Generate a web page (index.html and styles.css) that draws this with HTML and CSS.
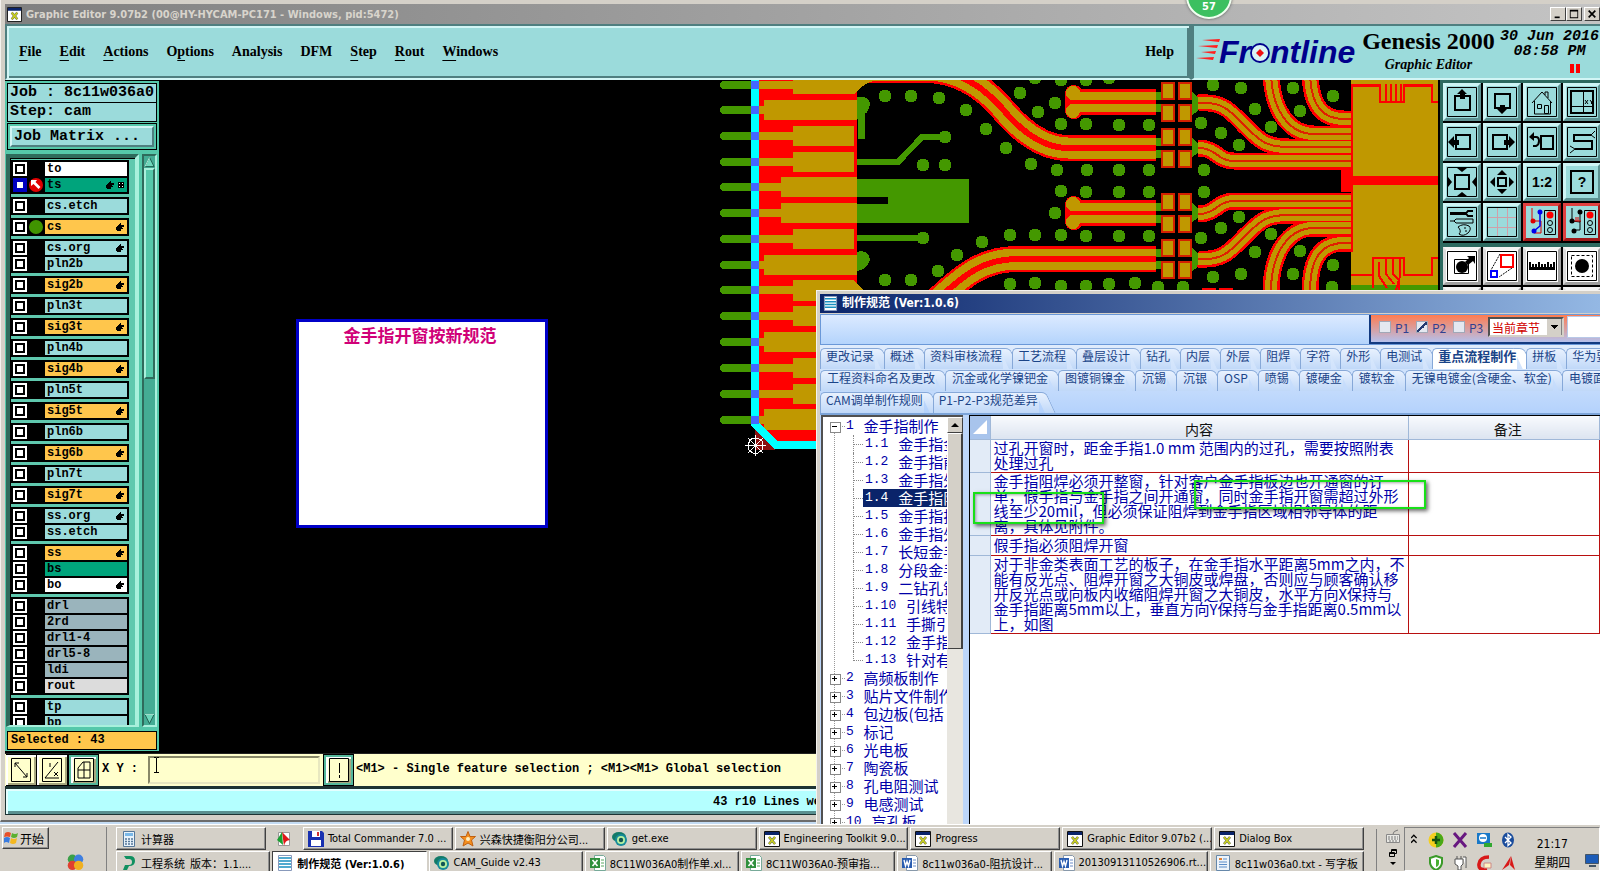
FILE: index.html
```html
<!DOCTYPE html>
<html lang="zh-CN">
<head>
<meta charset="utf-8">
<title>Graphic Editor 9.07b2</title>
<link rel="stylesheet" href="styles.css">
</head>
<body>
<svg class="defs" aria-hidden="true">
  <symbol id="i-x" viewBox="0 0 16 16"><path fill="#fff" stroke="#111" d="M.5.5h15v15H.5z"/><path fill="#0a246a" d="M1 1h14v3H1z"/><path stroke="#555" stroke-width="2.600" d="M5 6l6 7M11 6l-6 7"/><path stroke="#c8d020" stroke-width="1.800" d="M5 6l6 7M11 6l-6 7"/></symbol>
  <symbol id="i-list" viewBox="0 0 16 16"><path fill="#fff" stroke="#89b" d="M1.5.5h13v15h-13z"/><path stroke="#1a8fc0" stroke-width="1.6" d="M2 3h12M2 6h12M2 9h12M2 12h12"/></symbol>
  <symbol id="i-word" viewBox="0 0 16 16"><path fill="#fff" stroke="#89a" d="M4.500.5h9l2 2v13h-11z"/><path stroke="#6a8cc8" d="M11 5h3M11 8h3M11 11h3"/><path fill="#2a5db0" d="M0 3h10v10H0z"/><path fill="none" stroke="#fff" stroke-width="1.400" d="M2 5l1.500 6L5 6.500 6.500 11 8 5"/></symbol>
  <symbol id="i-xls" viewBox="0 0 16 16"><path fill="#fff" stroke="#7a9" d="M4.500.5h9l2 2v13h-11z"/><path stroke="#5aa860" d="M11 5h3M11 8h3M11 11h3"/><path fill="#2f8f3c" d="M0 3h10v10H0z"/><path stroke="#fff" stroke-width="1.600" d="M2.500 5l5 6M7.500 5l-5 6"/></symbol>
  <symbol id="i-eye" viewBox="0 0 16 16"><ellipse cx="7" cy="6" rx="7" ry="5" fill="#127a68"/><circle cx="9" cy="9" r="6" fill="#178a9a"/><circle cx="9" cy="9" r="4" fill="#b7f0a0"/><circle cx="9" cy="9" r="2.200" fill="#155"/></symbol>
  <symbol id="i-hand" viewBox="0 0 8 8"><path fill="#000" d="M0 4h1V3h1V2h1V1h1V0h1v2h3v2H6v1h1v1H5v2H1V7H0z"/></symbol>
</svg>

<main class="desktop">
<section class="editor">
  <header class="titlebar">
    <svg class="ico"><use href="#i-x"/></svg>
    <span class="title">Graphic Editor 9.07b2 (00@HY-HYCAM-PC171 - Windows, pid:5472)</span>
    <span class="winbtns">
      <button aria-label="Minimize"><svg viewBox="0 0 12 12"><path d="M2 9h6v2H2z"/></svg></button><button aria-label="Maximize"><svg viewBox="0 0 12 12"><path d="M1 1h10v10H1zM2 3v7h8V3z" fill-rule="evenodd"/></svg></button><button class="close" aria-label="Close"><svg viewBox="0 0 12 12"><path d="M2 2l8 8M10 2l-8 8" stroke="#000" stroke-width="2"/></svg></button>
    </span>
  </header>
  <div class="top">
    <nav class="menubar">
      <button><u>F</u>ile</button><button><u>E</u>dit</button><button><u>A</u>ctions</button><button>O<u>p</u>tions</button><button>Analysis</button><button>DFM</button><button><u>S</u>tep</button><button><u>R</u>out</button><button><u>W</u>indows</button><button class="help">Help</button>
    </nav>
    <div class="brand">
      <svg class="logo" viewBox="0 0 162 34" role="img" aria-label="Frontline">
        <path fill="#ff2020" d="M6 6l18-1-1 3zM2 12l20-1-1 3zM5 18l15-1-1 3zM0 24l18-1-1 3z"/>
        <g fill="#00008c" class="logotext"><text x="23" y="29">Fr</text><text x="74" y="29">ntline</text></g>
        <circle cx="64" cy="19" r="9" fill="#d9f4f4" stroke="#00008c" stroke-width="1.800"/>
        <path fill="#f01010" d="M64 15l4 4-4 4-4-4z"/>
      </svg>
      <div class="product"><b>Genesis 2000</b><i>Graphic Editor</i></div>
      <div class="clock"><span>30 Jun 2016</span><span>08:58 PM</span><svg class="pause" viewBox="0 0 10 9"><path fill="#f00" d="M0 0h4v9H0zM6 0h4v9H6z"/></svg></div>
    </div>
  </div>

  <div class="work">
    <aside class="side">
      <div class="job"><p>Job : 8c11w036a0</p><p>Step: cam</p></div>
      <div class="matrix"><button>Job Matrix ...</button></div>
      <div class="layers">
        <div class="list">
          <div class="grp"><div class="r w"><input type="checkbox" aria-label="to"><i></i><b>to</b></div><div class="r g cur"><input type="checkbox" aria-label="ts"><i><svg viewBox="0 0 14 14"><circle cx="7" cy="7" r="7" fill="#e00000"/><path fill="#fff" d="M2 2h6L6.500 4l5 5-2 2-5-5L2 8z"/></svg></i><b>ts<svg class="hand"><use href="#i-hand"/></svg><svg class="cell" viewBox="0 0 6 6"><path fill="#000" d="M0 0h6v6H0z"/><path fill="#fff" d="M1 1h1v1H1zM4 1h1v1H4zM1 4h1v1H1zM4 4h1v1H4z"/></svg></b></div></div>
          <div class="grp"><div class="r c"><input type="checkbox" aria-label="cs.etch"><i></i><b>cs.etch</b></div></div>
          <div class="grp"><div class="r o"><input type="checkbox" aria-label="cs"><i><svg viewBox="0 0 14 14"><circle cx="7" cy="7" r="7" fill="#409400"/></svg></i><b>cs<svg class="hand"><use href="#i-hand"/></svg></b></div></div>
          <div class="grp"><div class="r c"><input type="checkbox" aria-label="cs.org"><i></i><b>cs.org<svg class="hand"><use href="#i-hand"/></svg></b></div><div class="r c"><input type="checkbox" aria-label="pln2b"><i></i><b>pln2b</b></div></div>
          <div class="grp"><div class="r o"><input type="checkbox" aria-label="sig2b"><i></i><b>sig2b<svg class="hand"><use href="#i-hand"/></svg></b></div></div>
          <div class="grp"><div class="r c"><input type="checkbox" aria-label="pln3t"><i></i><b>pln3t</b></div></div>
          <div class="grp"><div class="r o"><input type="checkbox" aria-label="sig3t"><i></i><b>sig3t<svg class="hand"><use href="#i-hand"/></svg></b></div></div>
          <div class="grp"><div class="r c"><input type="checkbox" aria-label="pln4b"><i></i><b>pln4b</b></div></div>
          <div class="grp"><div class="r o"><input type="checkbox" aria-label="sig4b"><i></i><b>sig4b<svg class="hand"><use href="#i-hand"/></svg></b></div></div>
          <div class="grp"><div class="r c"><input type="checkbox" aria-label="pln5t"><i></i><b>pln5t</b></div></div>
          <div class="grp"><div class="r o"><input type="checkbox" aria-label="sig5t"><i></i><b>sig5t<svg class="hand"><use href="#i-hand"/></svg></b></div></div>
          <div class="grp"><div class="r c"><input type="checkbox" aria-label="pln6b"><i></i><b>pln6b</b></div></div>
          <div class="grp"><div class="r o"><input type="checkbox" aria-label="sig6b"><i></i><b>sig6b<svg class="hand"><use href="#i-hand"/></svg></b></div></div>
          <div class="grp"><div class="r c"><input type="checkbox" aria-label="pln7t"><i></i><b>pln7t</b></div></div>
          <div class="grp"><div class="r o"><input type="checkbox" aria-label="sig7t"><i></i><b>sig7t<svg class="hand"><use href="#i-hand"/></svg></b></div></div>
          <div class="grp"><div class="r c"><input type="checkbox" aria-label="ss.org"><i></i><b>ss.org<svg class="hand"><use href="#i-hand"/></svg></b></div><div class="r c"><input type="checkbox" aria-label="ss.etch"><i></i><b>ss.etch</b></div></div>
          <div class="grp"><div class="r o"><input type="checkbox" aria-label="ss"><i></i><b>ss<svg class="hand"><use href="#i-hand"/></svg></b></div><div class="r g"><input type="checkbox" aria-label="bs"><i></i><b>bs</b></div><div class="r w"><input type="checkbox" aria-label="bo"><i></i><b>bo<svg class="hand"><use href="#i-hand"/></svg></b></div></div>
          <div class="grp"><div class="r d"><input type="checkbox" aria-label="drl"><i></i><b>drl</b></div><div class="r d"><input type="checkbox" aria-label="2rd"><i></i><b>2rd</b></div><div class="r d"><input type="checkbox" aria-label="drl1-4"><i></i><b>drl1-4</b></div><div class="r d"><input type="checkbox" aria-label="drl5-8"><i></i><b>drl5-8</b></div><div class="r d"><input type="checkbox" aria-label="ldi"><i></i><b>ldi</b></div><div class="r l"><input type="checkbox" aria-label="rout"><i></i><b>rout</b></div></div>
          <div class="grp"><div class="r c"><input type="checkbox" aria-label="tp"><i></i><b>tp</b></div><div class="r c"><input type="checkbox" aria-label="bp"><i></i><b>bp</b></div></div>
        </div>
        <div class="mscroll">
          <svg viewBox="0 0 12 12"><path fill="#6fd8bc" stroke="#1d5a4c" d="M6 1l5 10H1z"/><path stroke="#b8f4e0" d="M6 1L1 11"/></svg>
          <div class="mthumb"></div>
          <svg viewBox="0 0 12 12"><path fill="#6fd8bc" stroke="#1d5a4c" d="M6 11L11 1H1z"/><path stroke="#b8f4e0" d="M1 1h10"/></svg>
        </div>
      </div>
      <p class="selected">Selected : 43</p>
    </aside>

    <div class="canvas">
      <svg class="pcb" viewBox="160 80 1281 690" preserveAspectRatio="xMinYMin slice" aria-hidden="true">
        <path fill="#f00" d="M760 80h98v210l20 14v137H772l-12-12z"/>
        <path fill="none" stroke="#449800" stroke-width="8" stroke-linecap="round" d="M725 85h29M725 110h29M725 136h29M725 162h29M725 187h29M725 213h29M725 239h29M725 265h29M725 290h29M725 316h29M725 342h29M725 368h29M725 394h29M725 420h29"/>
        <g fill="none" stroke-linecap="butt">
          <g stroke="#f00" stroke-width="26"><path id="tA" d="M860 70h70q40 2 71 36q34 42 68 42h88"/><path id="tD" d="M1157 259H1018C985 259 965 274 935 303"/></g>
          <g stroke="#c09800" stroke-width="21"><use href="#tA"/><use href="#tD"/></g>
          <g stroke="#f00" stroke-width="6"><use href="#tA"/><use href="#tD"/></g>
        </g>
        <path fill="none" stroke="#c09800" stroke-width="8" d="M760 85h40M760 110h10M760 136h40M760 162h40M760 187h30M760 213h30M760 239h40M760 265h10M760 290h40M760 316h40M760 342h10M760 368h40M760 394h40M760 420h10"/>
        <path fill="#c09800" d="M794 80h83q-12 3-22 14h-61zM765 100h93v20h-93zM794 126h61v20h-61zM794 152h61v20h-61zM782 177h76v20h-76zM782 203h76v20h-76zM794 229h61v20h-61zM765 255h93v20h-93zM794 280h61l20 21h-81zM794 306h61v20h-61zM765 332h93v20h-93zM794 358h61v20h-61zM794 384h61v20h-61zM765 409h93v21h-93z"/>
        <path fill="#449800" d="M858 97q12-2 13 7q-2 10-5 9v26h-7v-20h-1zM858 179h112v44h-112v-19h31v-7h-31zM858 252q12-3 13 8q-3 10-13 11z"/>
        <path fill="none" stroke="#449800" stroke-width="6" d="M858 162h41l24-25h23M858 238h66"/>
        <path fill="none" stroke="#449800" stroke-width="13" stroke-linecap="round" d="M946 137h0M924 165h0M946 165h0M924 238h0M886 96h0M912 96h0M940 98h0M967 110h0M987 129h0M1007 148h0M1032 164h0M1058 170h0M1021 93h0M1039 112h0M1056 103h0M1062 124h0M1062 191h0M1056 213h0M1062 235h0M1036 235h0M1011 235h0M983 242h0M958 255h0M939 271h0M886 280h0M912 280h0M1011 284h0M1036 283h0M1062 286h0M1062 80h0M1036 78h0M1087 80h0M1110 78h0M1087 124h0M1120 125h0M1150 125h0M1088 170h0M1120 170h0M1150 170h0M1087 192h0M1120 192h0M1150 192h0M1087 236h0M1120 236h0M1150 236h0M1087 286h0M1110 284h0M1136 283h0M1159 287h0M1184 287h0M1214 85h0M1242 88h0M1294 88h0M1334 96h0M1256 109h0M1301 111h0M1272 127h0M1202 123h0M1222 133h0M1240 145h0M1205 170h0M1205 192h0M1240 217h0M1222 228h0M1202 238h0M1272 234h0M1256 252h0M1301 251h0M1334 265h0M1294 274h0M1242 274h0M1214 277h0M1333 287h0"/>
        <g id="stub">
          <path fill="#f00" d="M1074 85q8 1 8 4h75v26h-75q-2 4-8 4q-7-1-8-8V93q1-7 8-8z"/>
          <path fill="none" stroke="#c09800" stroke-width="8" d="M1074 96h83M1074 108h83"/>
          <path stroke="#c09800" stroke-width="14" stroke-linecap="round" d="M1074 93h0M1074 111h0"/>
        </g>
        <use href="#stub" y="111"/>
        <path fill="none" stroke="#449800" stroke-width="8" d="M1157 96h6M1157 108h6M1157 142h6M1157 154h6M1157 207h6M1157 219h6M1157 253h6M1157 265h6"/>
        <path fill="#449800" d="M1193 92l6 5v14l-6 4zM1193 138l6 5v10l-6 4zM1193 203l6 5v10l-6 4zM1193 248l6 5v14l-6 4z"/>
        <path fill="#c09800" stroke="#d42000" stroke-width="2" d="M1163 83h12v16h-12zM1163 105h12v16h-12zM1163 129h12v16h-12zM1163 151h12v16h-12zM1163 194h12v16h-12zM1163 216h12v16h-12zM1163 240h12v16h-12zM1163 262h12v16h-12zM1180 83h12v16h-12zM1180 105h12v16h-12zM1180 129h12v16h-12zM1180 151h12v16h-12zM1180 194h12v16h-12zM1180 216h12v16h-12zM1180 240h12v16h-12zM1180 262h12v16h-12z"/>
        <g id="fan" fill="none">
          <path stroke="#f00" stroke-width="17" d="M1199 103C1225 101 1232 112 1247 127C1262 142 1268 147 1290 147H1352M1199 148C1218 148 1218 161 1235 161H1352M1272 70C1272 110 1290 134 1315 134H1352M1311 70C1311 105 1323 119 1345 119H1352"/>
          <path stroke="#c09800" stroke-width="12" d="M1199 103C1225 101 1232 112 1247 127C1262 142 1268 147 1290 147H1352M1199 148C1218 148 1218 161 1235 161H1352M1272 70C1272 110 1290 134 1315 134H1352M1311 70C1311 105 1323 119 1345 119H1352"/>
          <path stroke="#e02000" stroke-width="2" d="M1199 103C1225 101 1232 112 1247 127C1262 142 1268 147 1290 147H1352M1199 148C1218 148 1218 161 1235 161H1352M1272 70C1272 110 1290 134 1315 134H1352M1311 70C1311 105 1323 119 1345 119H1352"/>
        </g>
        <use href="#fan" transform="translate(0 362) scale(1 -1)"/>
        <path fill="#c09800" d="M1352 80h87v205h-87z"/>
        <path fill="#449800" d="M1352 285h87v6h-87z"/>
        <path fill="#f00" d="M1342 169h10v7h87v9h-87v7h-10zM1352 84h28v3h-26v165h-2zM1405 84h27v3h-27zM1352 274h21v2h-21zM1405 274h27v2h-27z"/>
        <path fill="none" stroke="#f00" stroke-width="2" d="M1381 84v18h24V84M1387 84v18M1392 84v18M1397 84v18M1402 84v18M1439 102h-6V84M1374 276v-18h31v18M1380 262v14l8 12M1387 258v16l8 10M1394 258v16l6 6v10M1401 258v18l-4 14M1374 276v12M1439 258h-6v18"/>
        <path fill="#f00" d="M1203 288h14v3h-14zM1220 288h14v3h-14z"/>
        <path fill="#8b1010" d="M756 430l20 20h-20z"/>
        <path fill="none" stroke="#0ff" stroke-width="8" d="M756 80v344l21 21h60"/>
        <path fill="none" stroke="#4466ff" stroke-width="8" d="M752 85h8M752 110h8M752 136h8M752 162h8M752 187h8M752 213h8M752 239h8M752 265h8M752 290h8M752 316h8M752 342h8M752 368h8M752 394h8M752 420h8"/>
        <path fill="none" stroke="#fff" d="M746 445.500h21M756.500 435v21M749 438l15 15M764 438l-15 15M751 440l3-2h5l4 3 1 4-1 5-4 3h-5l-4-3-1-5z"/>
      </svg>
      <div class="note">金手指开窗按新规范</div>
    </div>

    <div class="tools">
      <div class="grid">
        <button aria-label="Pan up"><svg viewBox="0 0 32 32"><path class="f" d="M1.500 1.500h29v29h-29z"/><path class="k" d="M9 10h15v14H9z"/><path d="M16 3l5 5h-2v5h-5V8h-3z"/></svg></button>
        <button aria-label="Pan down"><svg viewBox="0 0 32 32"><path class="f" d="M1.500 1.500h29v29h-29z"/><path class="k" d="M9 8h15v14H9z"/><path d="M16 28l5-5h-2v-4h-5v4h-3z"/></svg></button>
        <button aria-label="Home"><svg viewBox="0 0 32 32"><path class="f" d="M1.500 1.500h29v29h-29z"/><path class="n" d="M6 17L16 6l10 11M8.500 15v13h16V15M22 12V6h-3v3M11.500 18.500h4v4h-4zM18.500 19.500h4v8h-4z"/></svg></button>
        <button aria-label="Coordinates"><svg viewBox="0 0 32 32"><path class="f" d="M1.500 1.500h29v29h-29z"/><path class="k" d="M5 5h22v22H5z"/><path class="n" d="M17.500 5v22M5 20.500h22"/><path class="n" d="M19 14l3 4M22 14l-3 4M24 14l1.500 2 1.500-2M25.500 16v2"/></svg></button>
        <button aria-label="Pan left"><svg viewBox="0 0 32 32"><path class="f" d="M1.500 1.500h29v29h-29z"/><path class="k" d="M10 9h14v14H10z"/><path d="M2 16l6-6v4h5v5H8v3z"/></svg></button>
        <button aria-label="Pan right"><svg viewBox="0 0 32 32"><path class="f" d="M1.500 1.500h29v29h-29z"/><path class="k" d="M7 9h14v14H7z"/><path d="M29 16l-6-6v4h-5v5h5v3z"/></svg></button>
        <button aria-label="Previous view"><svg viewBox="0 0 32 32"><path class="f" d="M1.500 1.500h29v29h-29z"/><path class="k" d="M15 10h12v13H15zM6 11h4q3 0 3 4t-3 5H7"/><path d="M3 11l5-5v9z"/></svg></button>
        <button aria-label="Snake"><svg viewBox="0 0 32 32"><path class="f" d="M1.500 1.500h29v29h-29z"/><path class="k" d="M25 9H8v6h18v8H9"/><path class="n" d="M25 9l4-4M25 9l4 3M9 23l-5 4M9 23l-5-3"/></svg></button>
        <button aria-label="Zoom out"><svg viewBox="0 0 32 32"><path class="f" d="M1.500 1.500h29v29h-29z"/><path class="k" d="M9 9h14v14H9z"/><path d="M16 6l-5-4h10zM16 26l-5 4h10zM6 16l-4-5v10zM26 16l4-5v10z"/></svg></button>
        <button aria-label="Zoom in"><svg viewBox="0 0 32 32"><path class="f" d="M1.500 1.500h29v29h-29z"/><path class="k" d="M12 12h8v8h-8z"/><path d="M16 4l5 5H11zM16 28l5-5H11zM4 16l5-5v10zM28 16l-5-5v10z"/></svg></button>
        <button class="lbl"><span>1:2</span></button>
        <button class="lbl q"><span>?</span></button>
        <button aria-label="Setup"><svg viewBox="0 0 32 32"><path class="f" d="M1.500 1.500h29v29h-29z"/><path d="M4 6h16v3H4z"/><path class="k" d="M27 5h-5l-2 2.500 2 2.500h5"/><path class="n" d="M4 15h4l2-2h17v4H10l-2-2M12 21q5-4 11-1 3 3-1 7-5 4-9 1 3-3-1-7zM18 22h2M21 25h-2"/></svg></button>
        <button aria-label="Grid"><svg viewBox="0 0 32 32"><path class="f" d="M1.500 1.500h29v29h-29z"/><path stroke="#d0a0a8" d="M11.500 2v28M21.500 2v28M2 11.500h28M2 21.500h28"/></svg></button>
        <button class="red" aria-label="Snap nets"><svg viewBox="0 0 32 32"><path fill="none" stroke="#d00" d="M6 2v12l3 1h6v12H8"/><path fill="none" stroke="#00e" stroke-width="1.500" d="M14 5v15l-6 5"/><circle cx="14" cy="6" r="2.500" fill="#00e"/><circle cx="7" cy="15" r="2.500" fill="#d00"/><circle cx="8" cy="25" r="2.500" fill="#00e"/><path class="f" d="M18.500 4.500h11v24h-11z"/><circle cx="24" cy="9" r="3.500" fill="#f00"/><g fill="none" stroke="#000"><circle cx="24" cy="17" r="2.500"/><circle cx="24" cy="24" r="2.500"/></g></svg></button>
        <button class="red" aria-label="Snap off"><svg viewBox="0 0 32 32"><path class="n" d="M6 2v13l8 1v-10M14 15v9H8"/><path stroke="#d00" d="M8 15h7M10 11v4M12 11v4"/><circle cx="14" cy="6" r="2.500"/><circle cx="6" cy="15" r="2.500"/><circle cx="8" cy="25" r="2.500"/><path class="f" d="M18.500 4.500h11v24h-11z"/><circle cx="24" cy="9" r="3.500" fill="#f00"/><g fill="none" stroke="#000"><circle cx="24" cy="17" r="2.500"/><circle cx="24" cy="24" r="2.500"/></g></svg></button>
      </div>
      <div class="grid white">
        <button aria-label="Select"><svg viewBox="0 0 32 32"><path class="f" d="M1.500 1.500h29v29h-29z"/><path class="f" d="M8.500 9.500h14v14h-14z"/><circle cx="16" cy="17" r="6"/><path d="M19 12l4-4-2-2h8v8l-2-3-5 4z"/></svg></button>
        <button aria-label="Scale"><svg viewBox="0 0 32 32"><path class="f" d="M1.500 1.500h29v29h-29z"/><path class="n" stroke-dasharray="2 1" d="M14 4L5 20M26 18L13 27"/><path fill="none" stroke="#f00" stroke-width="2" d="M15 5h12v12H15z"/><path fill="none" stroke="#00f" stroke-width="2" d="M5 21h6v6H5z"/></svg></button>
        <button aria-label="Measure"><svg viewBox="0 0 32 32"><path class="f" d="M1.500 1.500h29v29h-29z"/><path d="M3 17h26v3H3z"/><path class="n" stroke-width="2" d="M4 12v6M7 14v4M10 14v4M13 12v6M16 14v4M19 14v4M22 12v6M25 14v4M28 12v6"/></svg></button>
        <button aria-label="Region"><svg viewBox="0 0 32 32"><path class="f" d="M1.500 1.500h29v29h-29z"/><path class="f" stroke-dasharray="3 2" d="M5.500 5.500h21v21h-21z"/><circle cx="16" cy="16" r="7"/></svg></button>
        <button aria-label="Tool"></button><button aria-label="Tool"></button><button aria-label="Tool"></button><button aria-label="Tool"></button>
      </div>
    </div>
  </div>

  <div class="command">
    <button class="cb" aria-label="Absolute"><svg viewBox="0 0 20 24"><path class="f" d="M.5.5h19v23H.5z"/><path class="n" d="M4 5l12 14M4 5v4M4 5h4M16 19v-4M16 19h-4"/></svg></button>
    <button class="cb" aria-label="Angle"><svg viewBox="0 0 20 24"><path class="f" d="M.5.5h19v23H.5z"/><path class="n" d="M3 20L16 4M3 20h14M8 5v4M12 14l4 4M16 14l-4 4"/></svg></button>
    <button class="cb on" aria-label="Grid snap"><svg viewBox="0 0 20 24"><path class="f" d="M.5.5h19v23H.5z"/><path class="n" d="M4 10l5-6h7v16H4zM10 4v16M4 12h12"/></svg></button>
    <label class="xy" for="xy">X Y :</label>
    <input id="xy" type="text">
    <button class="cb on" aria-label="Alert"><svg viewBox="0 0 20 24"><path class="f" d="M.5.5h19v23H.5z"/><path class="n" d="M10.500 5v10M10.500 17v3"/></svg></button>
    <p class="hint">&lt;M1&gt; - Single feature selection ; &lt;M1&gt;&lt;M1&gt; Global selection</p>
    <svg class="ibeam" viewBox="0 0 7 16"><path stroke="#000" fill="none" d="M1 .5h2l.5.5.5-.5h2M3.500 1v14M1 15.500h5"/></svg>
  </div>
  <div class="status"><p>43 r10 Lines were selected</p></div>
</section>

<div class="bubble">57</div>

<section class="dialog">
  <header class="dtitle"><svg class="ico"><use href="#i-list"/></svg>制作规范 (Ver:1.0.6)</header>
  <div class="dbar">
    <div class="filters">
      <label><input type="checkbox">P1</label><label><input type="checkbox" checked>P2</label><label><input type="checkbox">P3</label>
      <select aria-label="范围"><option>当前章节</option></select>
      <input class="search" type="text" aria-label="查找">
    </div>
  </div>
  <nav class="tabs">
    <div class="trow"><button>更改记录</button><button>概述</button><button>资料审核流程</button><button>工艺流程</button><button>叠层设计</button><button>钻孔</button><button>内层</button><button>外层</button><button>阻焊</button><button>字符</button><button>外形</button><button>电测试</button><button class="active">重点流程制作</button><button>拼板</button><button>华为要求</button></div>
    <div class="trow wide"><button>工程资料命名及更改</button><button>沉金或化学镍钯金</button><button>图镀铜镍金</button><button>沉锡</button><button>沉银</button><button>OSP</button><button>喷锡</button><button>镀硬金</button><button>镀软金</button><button>无镍电镀金(含硬金、软金)</button><button>电镀面铜</button></div>
    <div class="trow"><button>CAM调单制作规则</button><button>P1-P2-P3规范差异</button></div>
  </nav>
  <div class="dbody">
    <div class="tree">
      <ul>
        <li class="p open"><span>1 </span>金手指制作
          <ul>
            <li><span>1.1 </span>金手指金厚</li><li><span>1.2 </span>金手指前处理</li><li><span>1.3 </span>金手指外形</li><li class="sel"><span>1.4 </span>金手指阻焊</li><li><span>1.5 </span>金手指排版</li><li><span>1.6 </span>金手指外层</li><li><span>1.7 </span>长短金手指</li><li><span>1.8 </span>分段金手指</li><li><span>1.9 </span>二钻孔镀金</li><li><span>1.10 </span>引线特殊</li><li><span>1.11 </span>手撕引线</li><li><span>1.12 </span>金手指板</li><li><span>1.13 </span>针对有要求</li>
          </ul>
        </li>
        <li class="p"><span>2 </span>高频板制作</li><li class="p"><span>3 </span>贴片文件制作</li><li class="p"><span>4 </span>包边板(包括</li><li class="p"><span>5 </span>标记</li><li class="p"><span>6 </span>光电板</li><li class="p"><span>7 </span>陶瓷板</li><li class="p"><span>8 </span>孔电阻测试</li><li class="p"><span>9 </span>电感测试</li><li class="p"><span>10 </span>盲孔板</li>
      </ul>
      <div class="vscroll"><button aria-label="Scroll up"><svg viewBox="0 0 8 4"><path d="M4 0l4 4H0z"/></svg></button><div class="vthumb"></div></div>
    </div>
    <div class="sheet">
      <table>
        <colgroup><col class="c0"><col class="c1"><col></colgroup>
        <thead><tr><th class="corner"><svg viewBox="0 0 14 14"><path fill="#fff" d="M14 0v14H0z"/></svg></th><th>内容</th><th class="rem">备注</th></tr></thead>
        <tbody>
          <tr><th></th><td>过孔开窗时，距金手指1.0 mm 范围内的过孔，需要按照附表<br>处理过孔</td><td></td></tr>
          <tr><th></th><td>金手指阻焊必须开整窗，针对客户金手指板边也开通窗的订<br>单，假手指与金手指之间开通窗，同时金手指开窗需超过外形<br>线至少20mil，但必须保证阻焊到金手指区域相邻导体的距<br>离，具体见附件。</td><td></td></tr>
          <tr class="one"><th></th><td>假手指必须阻焊开窗</td><td></td></tr>
          <tr><th></th><td>对于非金类表面工艺的板子，在金手指水平距离5mm之内，不<br>能有反光点、阻焊开窗之大铜皮或焊盘，否则应与顾客确认移<br>开反光点或向板内收缩阻焊开窗之大铜皮，水平方向X保持与<br>金手指距离5mm以上，垂直方向Y保持与金手指距离0.5mm以<br>上，如图</td><td></td></tr>
        </tbody>
      </table>
      <div class="mark m1"></div><div class="mark m2"></div>
    </div>
  </div>
</section>
</main>

<footer class="taskbar">
  <div class="startcol">
    <button class="start"><svg viewBox="0 0 16 16"><path fill="#e8502a" d="M2 3q3-2 6 0L7 7Q4 6 1 7z"/><path fill="#5cb030" d="M9 3q3 2 6 0l-1 4q-3 2-6 0z"/><path fill="#3a7ce0" d="M1 8q3-2 6 0l-1 5q-3-2-5 0z"/><path fill="#f4b820" d="M8 8q3 2 6 0l-1 5q-3 2-6 0z"/></svg>开始</button>
    <svg class="quick" viewBox="0 0 16 16"><circle cx="5" cy="5" r="4.500" fill="#3aa048"/><circle cx="11" cy="5" r="4.500" fill="#3f7fe0"/><circle cx="5" cy="11" r="4.500" fill="#e04030"/><circle cx="11" cy="11" r="4.500" fill="#f0b020"/></svg>
  </div>
  <div class="tasks">
    <div class="brow">
      <button class="first"><svg viewBox="0 0 16 16"><path fill="#e8f2fa" stroke="#579" d="M2.500.5h11v15h-11z"/><path fill="#7ab8e8" d="M4 2h8v3H4z"/><path stroke="#579" stroke-width="1.500" stroke-dasharray="2 1" d="M4 8h8M4 10.500h8M4 13h8"/></svg>计算器</button>
      <span class="loose"><svg viewBox="0 0 16 16"><path fill="#fff" stroke="#999" d="M2.500 1.500h11v13h-11z"/><path fill="#e01818" d="M6 1l8 8q-5 0-6 6z"/><path fill="#18a030" d="M6 1L1 9l6 5z"/></svg></span>
      <button><svg viewBox="0 0 16 16"><path fill="#1830b0" d="M0 0h14l2 2v14H0z"/><path fill="#fff" d="M4 0h8v6H4zM3 9h10v6H3z"/><path fill="#d03030" d="M9 1h2v4H9z"/></svg>Total Commander 7.0 ...</button>
      <button><svg viewBox="0 0 16 16"><path fill="#f49020" stroke="#c06010" d="M8 .5l2 5h5.500l-4 3.500 1.500 6-5-3-5 3 1.500-6-4-3.500H6z"/><circle cx="8" cy="8" r="2" fill="#fff0c0"/></svg>兴森快捷衡阳分公司...</button>
      <button><svg><use href="#i-eye"/></svg>get.exe</button>
      <button><svg><use href="#i-x"/></svg>Engineering Toolkit 9.0...</button>
      <button><svg><use href="#i-x"/></svg>Progress</button>
      <button><svg><use href="#i-x"/></svg>Graphic Editor 9.07b2 (...</button>
      <button><svg><use href="#i-x"/></svg>Dialog Box</button>
    </div>
    <div class="brow">
      <button><svg viewBox="0 0 16 16"><path fill="#109060" d="M3 1h6q5 0 5 5t-6 5l-2 4H2l2-5h4q3 0 3-3t-3-3H5z"/></svg>工程系统&ensp;版本：1.1....</button>
      <button class="on"><svg><use href="#i-list"/></svg>制作规范 (Ver:1.0.6)</button>
      <button><svg><use href="#i-eye"/></svg>CAM_Guide v2.43</button>
      <button><svg><use href="#i-xls"/></svg>8C11W036A0制作单.xl...</button>
      <button><svg><use href="#i-xls"/></svg>8C11W036A0-预审指...</button>
      <button><svg><use href="#i-word"/></svg>8c11w036a0-阻抗设计...</button>
      <button><svg><use href="#i-word"/></svg>20130913110526906.rt...</button>
      <button><svg viewBox="0 0 16 16"><path fill="#eef4fa" stroke="#68a" d="M1.500.5h13v15h-13z"/><path stroke="#e08030" stroke-width="2" d="M4 4h3"/><path stroke="#5a8cc8" d="M8 4h4M4 7h8M4 9.500h8M4 12h8"/></svg>8c11w036a0.txt - 写字板</button>
    </div>
  </div>
  <div class="lang">
    <svg viewBox="0 0 16 14"><path fill="#e8e8e4" stroke="#888" d="M1.500 5.500h13v8h-13z"/><path stroke="#777" stroke-dasharray="2 1" d="M3 8h10M3 10h10M4 12h8"/><path fill="none" stroke="#777" d="M8 5q0-3 5-4"/></svg>
    <svg viewBox="0 0 16 18"><path fill="none" stroke="#000" d="M6.500.5h5v4h-5zM4.500 3.500h5v4h-5zM6 1.500h6M4 4.500h6"/><path d="M5 13h6l-3 3z"/></svg>
  </div>
  <div class="tray">
    <svg class="chev" viewBox="0 0 6 10"><path fill="none" stroke="#000" stroke-width="1.400" d="M0 4l3-3 3 3M0 9l3-3 3 3"/></svg>
    <div class="icons">
      <svg viewBox="0 0 16 16"><circle cx="8" cy="8" r="7.500" fill="#f4d020"/><path fill="#48a818" d="M8 .5a7.500 7.500 0 010 15z"/><path stroke="#115010" stroke-width="2.500" d="M8 4v8M4 8h8"/></svg>
      <svg viewBox="0 0 16 16"><path stroke="#681880" stroke-width="3" d="M2 1l12 14M14 1L2 15"/></svg>
      <svg viewBox="0 0 16 16"><path fill="#1878c8" d="M1 1h13v11H1z"/><circle cx="7" cy="6" r="4" fill="#fff"/><path stroke="#1878c8" stroke-width="1.500" d="M4 6h6"/><path fill="#30a830" d="M8 11h8v4H8z"/></svg>
      <svg viewBox="0 0 16 16"><ellipse cx="8" cy="8" rx="6" ry="7.500" fill="#1a4c9c"/><path fill="none" stroke="#fff" stroke-width="1.300" d="M5 5l6 6-3 2.500v-11L11 5l-6 6"/></svg>
      <svg viewBox="0 0 16 16"><path fill="#fff" stroke="#3a9a28" stroke-width="2" d="M8 1l6 2v5q-1 5-6 7-5-2-6-7V3z"/><path fill="#48b030" d="M8 4l3 1v3q0 3-3 4z"/></svg>
      <svg viewBox="0 0 16 16"><path fill="#fff" stroke="#555" d="M3 4h8v5l-2 2v4H6v-4L3 9zM5 1v3M9 1v3M11 2h3v11"/></svg>
      <svg viewBox="0 0 16 16"><path fill="none" stroke="#d81818" stroke-width="3.500" d="M13 2Q4 2 3 9t8 5"/><path fill="#fff4c0" stroke="#c88" d="M8 8h7v5H8z"/></svg>
      <svg viewBox="0 0 16 16"><path fill="#d81818" d="M11 1l4 14-5-5z"/><path fill="#d81818" d="M11 1l-2 9-7 5z"/></svg>
    </div>
    <div class="time"><span>21:17</span><span>星期四</span></div>
    <svg class="mon" viewBox="0 0 14 14"><path fill="#1c5cb8" stroke="#456" d="M.5.5h13v9H.5z"/><path fill="#456" d="M4 11h7v2H4z"/></svg>
  </div>
</footer>
</body>
</html>
```
FILE: styles.css
```css
* { box-sizing: border-box; }
html, body { height: 100%; }
body { margin: 0; display: flex; flex-direction: column; overflow: hidden; background: #d4d0c8; font-family: "DejaVu Sans Condensed", "Noto Sans CJK SC", sans-serif; }
p, ul { margin: 0; padding: 0; }
button { font: inherit; color: inherit; padding: 0; margin: 0; border: 0; background: none; }
.defs { position: absolute; width: 0; height: 0; }
.desktop { flex: 1; min-height: 0; position: relative; overflow: hidden; background: #c4dcf4; }

/* editor window */
.editor { height: calc(100% - 2px); display: flex; flex-direction: column; padding: 4px 0 5px 4px; background: #d4d0c8; border-bottom: 2px solid #6c6c6c; border-left: 1px solid #f4f2ee; }
.titlebar { display: flex; align-items: center; gap: 4px; height: 20px; padding: 0 0 0 2px; background: linear-gradient(90deg, #808080, #c4c4c4); color: #d8d4cc; font-size: 11px; font-weight: bold; }
.ico { width: 15px; height: 15px; flex: none; }
.winbtns { margin-left: auto; display: flex; }
.winbtns button { width: 16px; height: 14px; background: #d4d0c8; border: 1px solid; border-color: #fff #404040 #404040 #fff; display: flex; justify-content: center; align-items: center; }
.winbtns svg { width: 10px; height: 10px; }
.winbtns .close { margin-left: 2px; }
.top { display: flex; flex: none; height: 56px; overflow: hidden; }
.menubar, .brand { background: #9bdbdb; border: 2px solid; border-color: #4f7f80 #4f7f80 #d2f5f5 #4f7f80; box-shadow: inset 2px 2px #d2f5f5, inset -2px -2px #4f7f80; }
.menubar { flex: 1; display: flex; align-items: center; gap: 18px; padding: 0 15px 0 12px; font: bold 14px/18px "Liberation Serif", serif; }
.menubar u { text-underline-offset: 4px; }
.help { margin-left: auto; }
.brand { display: flex; gap: 2px; width: 409px; padding: 3px 0 0 2px; overflow: hidden; box-shadow: none; white-space: nowrap; border-left-width: 3px; border-right-width: 0; }
.logo { width: 162px; height: 34px; margin-top: 5px; flex: none; }
.logotext { font: italic bold 32px "Liberation Sans", sans-serif; }
.product { display: flex; flex-direction: column; align-items: center; width: 137px; flex: none; font-family: "Liberation Serif", serif; }
.product b { font-size: 24px; line-height: 24px; }
.product i { font-size: 14px; line-height: 16px; font-weight: bold; margin-top: 4px; }
.clock { display: flex; flex-direction: column; align-items: center; width: 101px; flex: none; font: italic bold 15px/15px "Liberation Mono", monospace; }
.pause { width: 10px; height: 9px; margin: 5px 0 0 50px; }

.work { flex: 1; min-height: 0; display: flex; background: #000; overflow: hidden; }
.side { width: 154px; flex: none; display: flex; flex-direction: column; background: #55c8aa; padding: 2px 1px 1px 1px; border-top: 1px solid #000; font: bold 15px/17px "Liberation Mono", monospace; margin-bottom: 2px; }
.job { margin: 0 1px; background: #9bdbdb; border: 1px solid #000; }
.job p { height: 18px; padding-left: 2px; white-space: nowrap; overflow: hidden; }
.job p + p { border-top: 1px solid #000; height: 19px; }
.matrix { margin: 1px 1px 4px; border: 1px solid #000; padding: 2px; height: 27px; }
.matrix button { display: block; width: 100%; height: 21px; text-align: left; padding-left: 2px; background: #9bdbdb; border: 2px solid; border-color: #d2f5f5 #4f7f80 #4f7f80 #d2f5f5; }
.layers { flex: 1; min-height: 0; display: flex; gap: 3px; }
.list { width: 133px; overflow: hidden; border: 4px solid; border-width: 4px 4px 2px 4px; border-color: #2f6b5c #a8f0dc #a8f0dc #2f6b5c; box-shadow: inset 1px 1px #000; padding: 2px 6px 0 1px; display: flex; flex-direction: column; gap: 3px; background: #5fc8ae; font-size: 12px; line-height: 14px; }
.grp { flex: none; background: #000; padding: 2px; display: grid; gap: 2px; }
.r { display: flex; height: 14px; }
.r input { appearance: none; margin: 0; width: 14px; height: 14px; background: #fff; border: 2px solid #fff; box-shadow: inset 0 0 0 2px #000; }
.r i { width: 18px; display: flex; justify-content: center; }
.r i svg { width: 14px; height: 14px; }
.r b { flex: 1; display: flex; align-items: center; padding: 0 3px 0 2px; gap: 4px; }
.hand { width: 8px; height: 8px; margin-left: auto; }
.cell { width: 6px; height: 6px; }
.w b { background: #fff; } .g b { background: #00a47c; } .c b { background: #9bdbdb; } .o b { background: #ffc64c; } .d b { background: #9ab4bc; } .l b { background: #dcdcdc; }
.r.cur input { border-color: #0000c0; box-shadow: inset 0 0 0 2px #0000c0; }
.mscroll { width: 15px; display: flex; flex-direction: column; background: #44ac94; border: 2px solid; border-color: #2f6b5c #a8f0dc #a8f0dc #2f6b5c; }
.mscroll svg { width: 11px; height: 12px; flex: none; }
.mscroll svg:last-child { margin-top: auto; }
.mthumb { height: 37%; background: #55c8aa; border: 2px solid; border-color: #a8f0dc #2f6b5c #2f6b5c #a8f0dc; }
.selected { margin: 4px 1px 0; height: 19px; background: #ffc64c; border: 1px solid #000; padding-left: 3px; font-size: 12px; line-height: 17px; }

.canvas { flex: 1; min-width: 0; position: relative; overflow: hidden; }
.pcb { display: block; width: 100%; height: 100%; shape-rendering: crispEdges; }
.note { position: absolute; left: 137px; top: 239px; width: 252px; height: 209px; background: #fff; border: 3px solid #0000c8; padding-right: 4px; text-align: center; color: #d00078; font: bold 17px/26px "Noto Sans CJK SC", sans-serif; }

.tools { width: 160px; flex: none; background: #2c6a60; padding: 3px 0 0 3px; overflow: hidden; }
.grid { display: grid; grid-template-columns: repeat(4, 38px); gap: 2px; width: 160px; padding-bottom: 2px; background: #000; }
.grid + .grid { margin-top: 4px; }
.grid button { width: 38px; height: 38px; background: #9bdbdb; border: 3px solid; border-color: #cdf5f5 #5c9292 #5c9292 #cdf5f5; }
.grid svg { display: block; width: 32px; height: 32px; }
.grid.white button { background: #fff; border-color: #f4f4f4 #a0a0a0 #a0a0a0 #dcdcdc; }
.grid .red { border-color: #e04040 #a01818 #a01818 #e04040; }
.grid .lbl { padding: 1px; font: bold 14px/28px "Liberation Sans", sans-serif; }
.lbl span { display: block; border: 1px solid #000; height: 30px; }
.grid .lbl.q { padding: 4px; line-height: 20px; }
.lbl.q span { border-width: 2px; height: 24px; }
.f { fill: none; stroke: #000; } .k { fill: none; stroke: #000; stroke-width: 2; } .n { fill: none; stroke: #000; }

.command { position: relative; flex: none; display: flex; height: 33px; padding-left: 1px; background: #ffffcc; border-top: 1px solid #222; font: bold 12px/30px "Liberation Mono", monospace; white-space: nowrap; overflow: hidden; }
.cb { width: 31px; flex: none; padding: 0; display: flex; align-items: center; justify-content: center; background: #ffffcc; border: 1px solid #000; border-left-width: 0; box-shadow: inset 2px 2px #fff, inset -2px -2px #a8a880; }
.cb svg { width: 20px; height: 24px; }
.cb.on { border: 3px solid #55b89c; outline: 1px solid #000; outline-offset: -1px; }
.xy { width: 49px; padding-left: 3px; white-space: pre; }
.command input { width: 172px; min-width: 0; margin: 2px 3px 2px 0; background: #ffffcc; border: 2px solid; border-color: #888868 #e8e8c0 #e8e8c0 #888868; }
.hint { padding-left: 2px; }
.ibeam { position: absolute; left: 148px; top: 3px; width: 7px; height: 16px; }
.status { flex: none; height: 29px; border: 2px solid #1d3434; border-width: 3px 2px 1px 1px; background: #b4ffff; box-shadow: inset 2px 2px #e4ffff, inset -2px -3px #5a9090; font: bold 12px/26px "Liberation Mono", monospace; white-space: nowrap; overflow: hidden; }
.status p { padding-left: 707px; }

.bubble { position: absolute; left: 1186px; top: -27px; width: 46px; height: 46px; border-radius: 50%; background: #3cc060; border: 2px solid #f0fff0; box-shadow: 0 0 3px #555; color: #fff; font-size: 11px; font-weight: bold; line-height: 64px; text-align: center; }

/* specification window */
.dialog { position: absolute; left: 816px; right: 0; top: 290px; bottom: 0; display: flex; flex-direction: column; background: #d4d0c8; border: solid #f4f2ee; border-width: 1px 0 0 1px; padding: 3px 0 0 3px; font-family: "Noto Sans CJK SC", sans-serif; font-size: 12px; color: #123a80; overflow: hidden; }
.dtitle { height: 19px; flex: none; display: flex; align-items: center; gap: 4px; padding-left: 3px; background: linear-gradient(90deg, #0a246a, #94b8e4); color: #fff; font: bold 12px/19px "DejaVu Sans Condensed", "Noto Sans CJK SC", sans-serif; }
.dbar { flex: none; height: 31px; margin-top: 1px; display: flex; justify-content: flex-end; background: linear-gradient(#dceaff, #b4d4fc); border: 1px solid #6a98d8; border-right: 0; }
.filters { width: 231px; display: flex; align-items: center; background: linear-gradient(#ff7c50, #b4c0ec); border-left: 2px solid #123a80; border-bottom: 2px solid #123a80; padding: 0 0 3px 8px; overflow: hidden; }
.filters label { display: flex; align-items: center; gap: 4px; width: 37px; color: #304090; flex: none; }
.filters label input { appearance: none; width: 12px; height: 12px; margin: 0; background: #e4e8f0; border: 1px solid #a0a8b8; flex: none; }
.filters label input:checked { background: #e4e8f0 linear-gradient(135deg, transparent 42%, #223a70 42% 60%, transparent 60%); }
.filters select { width: 76px; height: 20px; flex: none; margin: 0 2px 0 -2px; font: 12px "Noto Sans CJK SC", sans-serif; color: #d00000; border: 2px solid; border-color: #505050 #d4d0c8 #d4d0c8 #505050; border-radius: 0; appearance: none; padding: 0 0 0 2px; background: linear-gradient(#000, #000) 61px 6px/7px 1px no-repeat, linear-gradient(#000, #000) 62px 7px/5px 1px no-repeat, linear-gradient(#000, #000) 63px 8px/3px 1px no-repeat, linear-gradient(#000, #000) 64px 9px/1px 1px no-repeat, linear-gradient(#808080, #808080) 71px 0/1px 16px no-repeat, linear-gradient(#d4d0c8, #d4d0c8) 57px 0/15px 16px no-repeat, #fff; }
.search { width: 60px; flex: none; height: 22px; border: 1px solid #b8c8e8; margin: 0 0 0 1px; padding: 0; }
.tabs { flex: none; padding-top: 2px; background: linear-gradient(#e0ecfc, #b4d2fc); border-bottom: 2px solid #7ca4d8; }
.trow { display: flex; height: 22px; white-space: nowrap; }
.trow button { flex: none; height: 22px; padding: 0 10px 4px 6px; line-height: 18px; position: relative; z-index: 0; color: #1a4488; }
.trow button::before, .trow button::after { content: ""; position: absolute; z-index: -1; top: 1px; bottom: 0; border: 1px solid #86a8d8; border-bottom: 0; background: linear-gradient(#e8f1fe, #c0d8f8); }
.trow button::before { left: 0; right: 9px; border-right: 0; border-radius: 5px 0 0 0; }
.trow button::after { right: 2px; width: 10px; border-left: 0; border-radius: 0 5px 0 0; transform: skewX(25deg); transform-origin: top; }
.trow.wide button { padding: 0 10px 4px 7px; }
.trow .active { font-weight: bold; font-size: 13px; }
.trow .active::before, .trow .active::after { background: #fff; }
.dbody { flex: 1; min-height: 0; display: flex; gap: 6px; padding-left: 1px; background: #bcd6fa; }
.tree { width: 142px; flex: none; display: flex; background: #fff; border: solid #505050; border-width: 2px 0 0 2px; overflow: hidden; font-size: 15px; line-height: 18px; color: #0000a8; white-space: nowrap; }
.tree > ul { flex: 1; min-width: 0; overflow: hidden; padding-left: 22px; }
.tree li { list-style: none; position: relative; height: 18px; padding-left: 1px; }
.tree li.open { height: auto; }
.tree span { font: 13px/18px "Liberation Mono", monospace; white-space: pre; display: inline-block; vertical-align: top; margin-right: 2px; }
.tree li ul li { padding-left: 19px; }
.tree li ul li::before { content: ""; position: absolute; left: 7px; top: 0; width: 9px; height: 9px; border: dotted #888; border-width: 0 0 1px 1px; }
.tree li ul li::after { content: ""; position: absolute; left: 7px; top: 9px; height: 9px; border-left: 1px dotted #888; }
.tree li ul li:last-child::after { display: none; }
.tree .p::before { content: ""; position: absolute; left: -15px; top: 5px; width: 9px; height: 9px; border: 1px solid #888; background: linear-gradient(#000, #000) 1px 3px/5px 1px no-repeat, linear-gradient(#000, #000) 3px 1px/1px 5px no-repeat, #fff; z-index: 1; }
.tree .p.open::before { background: linear-gradient(#000, #000) 1px 3px/5px 1px no-repeat, #fff; }
.tree .p::after { content: ""; position: absolute; left: -11px; top: 9px; bottom: -9px; width: 10px; border: dotted #999; border-width: 1px 0 0 1px; }
.tree li.sel { color: #fff; background: linear-gradient(#0a246a, #0a246a) 17px 0/120px 18px no-repeat; }
.vscroll { width: 16px; flex: none; display: flex; flex-direction: column; background: #e8e6e0; }
.vscroll button { height: 16px; background: #d4d0c8; border: 1px solid; border-color: #fff #404040 #404040 #fff; display: flex; align-items: center; justify-content: center; }
.vscroll svg { width: 8px; height: 4px; }
.vthumb { height: 216px; background: #d4d0c8; border: 1px solid; border-color: #fff #404040 #404040 #fff; border-right-width: 2px; }
.sheet { flex: 1; min-width: 0; position: relative; background: #fff; border: solid #000; border-width: 1px 0 0 1px; }
table { width: 100%; table-layout: fixed; border-collapse: collapse; font-size: 15px; line-height: 15px; color: #0000a8; }
.c0 { width: 20px; } .c1 { width: 418px; }
thead th { height: 23px; padding: 4px 0 0; font-weight: normal; font-size: 14px; color: #111; background: linear-gradient(#f8fafd, #dce4f0); border-right: 1px solid #a0b8d8; border-bottom: 1px solid #a0b8d8; }
thead .rem { padding-left: 8px; }
thead .corner { background: #a8c4ec; padding: 0; }
.corner svg { display: block; width: 14px; height: 14px; margin: 3px; }
tbody th { background: #e2ebf7; border: 1px solid #a0b8d8; border-left: 0; }
td { padding: 0 0 2px 3px; border-bottom: 1px solid #b81010; border-right: 1px solid #b81010; vertical-align: top; white-space: nowrap; }
.one td { padding-top: 1px; padding-bottom: 3px; }
.mark { position: absolute; border: 2px solid #18e018; box-shadow: 2px 2px 4px rgba(0,0,0,.6), inset 1px 1px 3px rgba(0,0,0,.35); }
.m1 { left: 3px; top: 76px; width: 131px; height: 32px; }
.m2 { left: 224px; top: 64px; width: 232px; height: 29px; }

/* taskbar */
.taskbar { flex: none; height: 47px; display: flex; overflow: hidden; background: #d4d0c8; border-top: 1px solid #fff; padding-top: 2px; font: 11px "DejaVu Sans Condensed", "Noto Sans CJK SC", sans-serif; white-space: nowrap; }
.startcol { width: 107px; flex: none; display: flex; flex-direction: column; gap: 5px; padding-left: 2px; border-right: 1px solid #808080; margin-right: 9px; }
.start, .brow button { display: flex; align-items: center; gap: 4px; height: 23px; background: #d4d0c8; border: 1px solid; border-color: #fff #404040 #404040 #fff; box-shadow: inset -1px -1px #909090; }
.start { width: 47px; gap: 1px; font-size: 12px; padding: 0; }
.start svg, .brow svg { width: 16px; height: 16px; flex: none; }
.quick { width: 17px; height: 17px; margin-left: 65px; }
.tasks { flex: 1; min-width: 0; display: flex; flex-direction: column; gap: 1px; }
.brow { display: flex; gap: 2px; }
.brow button { flex: 1 1 0; min-width: 0; padding-left: 4px; overflow: hidden; }
.loose { width: 33px; flex: none; display: flex; align-items: center; justify-content: center; }
.brow .on { background: #fff; font-weight: bold; border-color: #404040 #fff #fff #404040; box-shadow: none; }
.lang { width: 28px; flex: none; margin: 2px 0 0 12px; padding-left: 8px; display: flex; flex-direction: column; gap: 6px; border-left: 1px solid #808080; }
.lang svg { width: 16px; }
.tray { flex: none; width: 196px; display: flex; border: 1px solid; border-color: #808080 #fff #fff #808080; padding-left: 6px; overflow: hidden; }
.chev { width: 6px; height: 10px; margin: 6px 11px 0 0; }
.icons { display: grid; grid-template-columns: repeat(4, 16px); column-gap: 8px; row-gap: 7px; padding-top: 4px; align-content: start; }
.icons svg { width: 16px; height: 16px; }
.time { width: 40px; margin-left: 18px; padding-top: 8px; display: flex; flex-direction: column; align-items: center; gap: 2px; font-size: 12px; line-height: 17px; }
.mon { width: 14px; height: 14px; margin: 26px 0 0 14px; flex: none; }
```
